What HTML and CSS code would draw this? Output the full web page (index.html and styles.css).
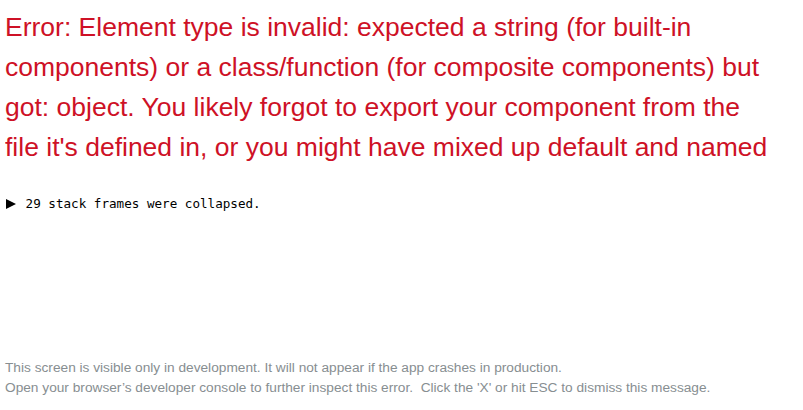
FILE: index.html
```html
<!DOCTYPE html>
<html>
<head>
<meta charset="utf-8">
<link rel="stylesheet" href="styles.css">
</head>
<body>
<div class="overlay">
  <div class="header">Error: Element type is invalid: expected a string (for built-in<br>components) or a class/function (for composite components) but<br>got: object. You likely forgot to export your component from the<br>file it's defined in, or you might have mixed up default and named</div>
  <div class="frames"><svg class="arrow" width="10" height="10" viewBox="0 0 10 10"><polygon points="0,0 10,5 0,10" fill="#000"/></svg> 29 stack frames were collapsed.</div>
  <div class="spacer"></div>
  <div class="footer">
    <div>This screen is visible only in development. It will not appear if the app crashes in production.</div>
    <div>Open your browser’s developer console to further inspect this error.&nbsp; Click the 'X' or hit ESC to dismiss this message.</div>
  </div>
</div>
</body>
</html>
```
FILE: styles.css
```css
html, body {
  margin: 0;
  padding: 0;
  background: #ffffff;
}
.overlay {
  box-sizing: border-box;
  height: 410px;
  padding: 7px 3px 12px 5px;
  display: flex;
  flex-direction: column;
  overflow: hidden;
}
.header {
  font-family: "Liberation Sans", Arial, sans-serif;
  font-size: 26.5px;
  line-height: 40px;
  color: #ce1126;
  white-space: nowrap;
  max-height: 160px;
  overflow: hidden;
  flex: 0 0 auto;
  margin-bottom: 27px;
}
.frames {
  font-family: "DejaVu Sans Mono", monospace;
  font-size: 12.6px;
  line-height: 20px;
  color: #000000;
}
.arrow {
  display: inline-block;
  vertical-align: -1px;
  margin-left: 1px;
  margin-right: 2px;
}
.spacer {
  flex: 1 1 auto;
}
.footer {
  font-family: "Liberation Sans", Arial, sans-serif;
  font-size: 13.7px;
  line-height: 20px;
  color: #878e91;
}
```
